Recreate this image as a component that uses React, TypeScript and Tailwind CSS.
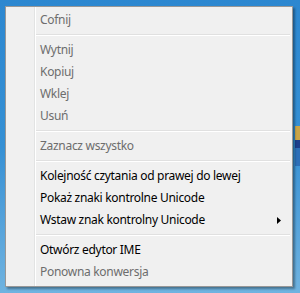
type Item =
  | { kind: 'item'; label: string; disabled?: boolean; submenu?: boolean }
  | { kind: 'sep' };

const items: Item[] = [
  { kind: 'item', label: 'Cofnij', disabled: true },
  { kind: 'sep' },
  { kind: 'item', label: 'Wytnij', disabled: true },
  { kind: 'item', label: 'Kopiuj', disabled: true },
  { kind: 'item', label: 'Wklej', disabled: true },
  { kind: 'item', label: 'Usuń', disabled: true },
  { kind: 'sep' },
  { kind: 'item', label: 'Zaznacz wszystko', disabled: true },
  { kind: 'sep' },
  { kind: 'item', label: 'Kolejność czytania od prawej do lewej' },
  { kind: 'item', label: 'Pokaż znaki kontrolne Unicode' },
  { kind: 'item', label: 'Wstaw znak kontrolny Unicode', submenu: true },
  { kind: 'sep' },
  { kind: 'item', label: 'Otwórz edytor IME' },
  { kind: 'item', label: 'Ponowna konwersja', disabled: true },
];

export default function App() {
  return (
    <div className="relative w-[300px] h-[293px] overflow-hidden bg-gradient-to-b from-[#2c87d0] via-[#3590d4] to-[#6fb3e0] pt-[6px] pl-[5px] font-['Noto_Sans',sans-serif]">
      {/* desktop icon peeking out on the right */}
      <div className="absolute left-[295px] top-[126px] w-[5px] h-[40px] flex flex-col">
        <div className="h-[14px] bg-[#c9a548]" />
        <div className="h-[8px] bg-[#1d3f8c]" />
        <div className="h-[18px] bg-[#2d6fb8]" />
      </div>

      <div className="relative w-[288px] h-[281px] border border-[#979797] bg-[#f0f0f0] shadow-[2px_2px_2px_rgba(0,0,0,0.35)] flex">
        <div className="w-[29px] shrink-0 border-r border-[#e2e3e3]" />
        <div className="w-px shrink-0 bg-white" />
        <div className="flex-1 flex flex-col pt-[2px] pr-[2px]">
          {items.map((it, i) =>
            it.kind === 'sep' ? (
              <div key={i} className="h-[8px] flex flex-col justify-center">
                <div className="h-px bg-[#e0e0e0]" />
                <div className="h-px bg-white" />
              </div>
            ) : (
              <div
                key={i}
                className={`h-[22px] flex items-center pl-[4px] text-[12px] tracking-[-0.3px] ${it.disabled ? 'text-[#6d6d6d]' : 'text-black'}`}
              >
                <span className="flex-1">{it.label}</span>
                {it.submenu && (
                  <svg width="4" height="7" viewBox="0 0 4 7" className="mr-[9px]">
                    <path d="M0 0 L4 3.5 L0 7 Z" fill="#000" />
                  </svg>
                )}
              </div>
            )
          )}
        </div>
      </div>
    </div>
  );
}
